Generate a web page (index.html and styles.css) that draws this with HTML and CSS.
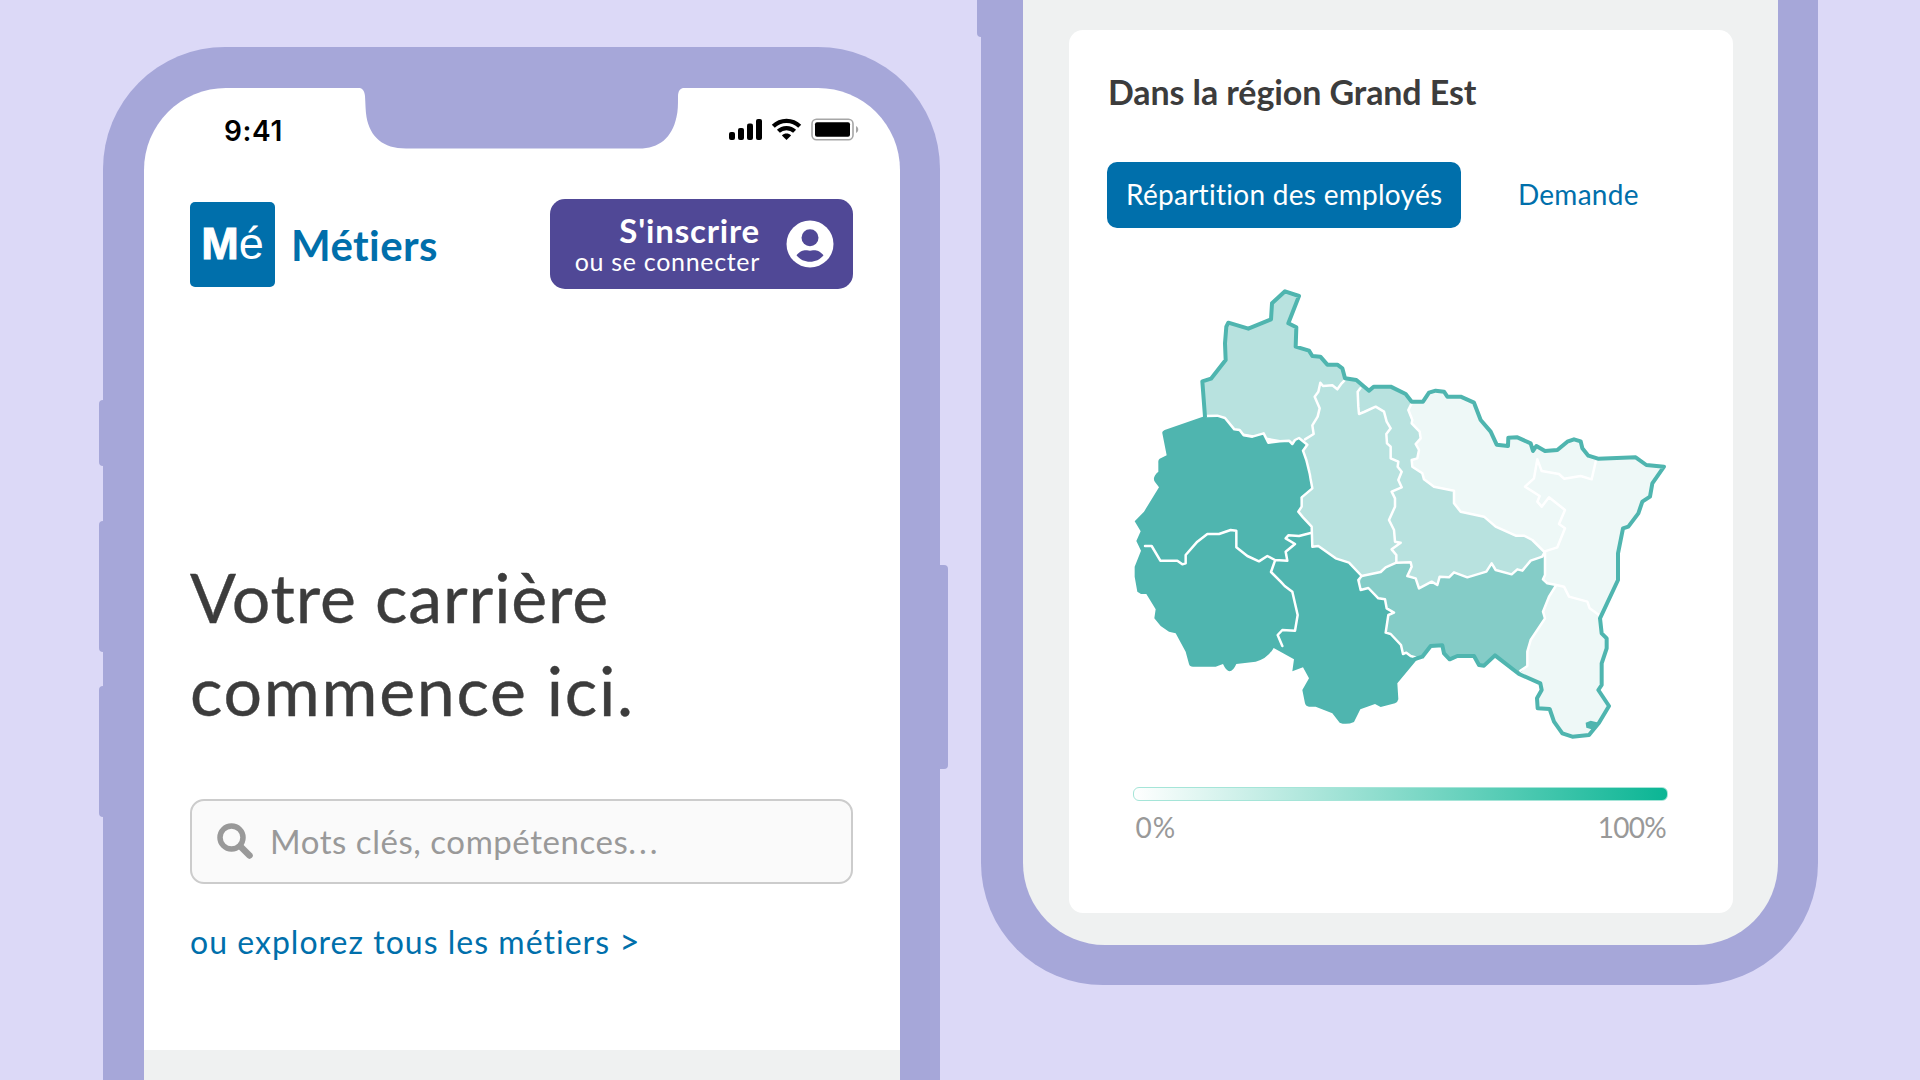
FILE: index.html
```html
<!DOCTYPE html>
<html lang="fr">
<head>
<meta charset="utf-8">
<title>Métiers</title>
<link rel="stylesheet" href="styles.css">
</head>
<body>
<main class="stage">
  <section class="phone phone-home">
    <span class="key key-mute"></span>
    <span class="key key-up"></span>
    <span class="key key-down"></span>
    <span class="key key-power"></span>
    <svg class="notch" viewBox="0 0 343 102" width="343" height="102"><path d="M0 0H343V40.5H336C330 40.5 328 44 328 50C328 58 328 64 326.500 70C322 91 309 101.500 289 101.500H56C33 101.500 20 90 16.500 70C15.500 64 15.500 57 15 49C14.500 43 12 40.500 6 40.500H0Z"/></svg>
    <div class="screen">
      <div class="status">
        <span class="clock">9:41</span>
        <svg class="signals" viewBox="0 0 130 23" width="130" height="23">
          <rect x="0" y="14" width="6" height="8" rx="2"/><rect x="9" y="10" width="6" height="12" rx="2"/><rect x="18" y="5.500" width="6" height="16.500" rx="2"/><rect x="27" y="1" width="6" height="21" rx="2"/>
          <g fill="none" stroke="#000" stroke-width="4.200"><path d="M44.300 8.300C51.500 1 63.500 1 70.700 8.300"/><path d="M49.400 13.300C53.700 9 61.300 9 65.600 13.300"/></g>
          <path d="M52.900 17.400C55.500 14.900 59.500 14.900 62.100 17.400L57.500 22Z"/>
          <rect x="83" y="1.200" width="41" height="20.600" rx="4.500" fill="#fff" stroke="#a6a6a6" stroke-width="1.600"/><rect x="86" y="4.200" width="35" height="14.600" rx="2"/>
          <path d="M127 8C130 9.500 130 13.500 127 15Z" fill="#a6a6a6"/>
        </svg>
      </div>
      <header class="topbar">
        <div class="logo"><b>M</b><span>é</span></div>
        <span class="brand">Métiers</span>
        <div class="signup">
          <div class="signup-text"><strong>S'inscrire</strong><span>ou se connecter</span></div>
          <svg viewBox="0 0 48 48" width="48" height="48"><circle cx="24" cy="24" r="23.500" fill="#fff"/><circle cx="24" cy="17.800" r="8.500" fill="#504896"/><path d="M10.500 35.300C14 30.500 19 29.700 21 30.300Q24 31 27 30.300C29 29.700 34 30.500 37.500 35.300C31 44 17 44 10.500 35.300Z" fill="#504896"/></svg>
        </div>
      </header>
      <h1 class="headline"><span class="line-one">Votre carrière</span><br><span class="line-two">commence ici.</span></h1>
      <div class="search">
        <svg viewBox="0 0 36 36" width="36" height="36"><circle cx="14.500" cy="14.500" r="11.500" fill="none" stroke="#999" stroke-width="5.500"/><path d="M23.500 23.500L32.500 32.500" stroke="#999" stroke-width="6.500" stroke-linecap="round"/></svg>
        <span>Mots clés, compétences<span class="dots">...</span></span>
      </div>
      <a class="explore">ou explorez tous les métiers <span class="arrow">&gt;</span></a>
      <div class="next"></div>
    </div>
  </section>

  <section class="phone phone-region">
    <span class="key key-side"></span>
    <div class="screen">
      <article class="card">
        <h2 class="card-title">Dans la région Grand Est</h2>
        <nav class="tabs"><span class="tab tab-on">Répartition des employés</span><span class="tab">Demande</span></nav>
        <svg class="map" viewBox="0 0 1680 1410" width="560" height="470">
          <path class="pale" d="M868 365H912L930 338L950 332L975 335L985 350H1025L1065 368L1085 420L1115 455L1133 494L1167 498L1168 473L1195 472L1235 490L1242 513L1252 498L1278 513L1315 510L1345 485L1365 478L1385 484L1390 505L1408 527L1437 536L1550 532L1582 555L1635 560L1600 610L1593 650L1570 665L1558 700L1528 740L1512 745L1497 820V900L1443 1015L1448 1060L1463 1075V1105L1448 1150V1215L1438 1230L1470 1278L1440 1328L1410 1365L1360 1370L1330 1360L1305 1325L1292 1287L1256 1285L1254 1255L1268 1230L1264 1210L1200 1182L1200 860L868 600Z"/>
          <path class="light" d="M258 410L250 304L276 296L320 240L318 190L322 140L328 128L388 146L456 118L459 70L498 34L540 48L508 130L532 142L530 200L570 212L580 228L604 230L625 254H655L670 265L678 295L712 300L750 332L764 320H815L860 342L878 367L868 390L880 420L878 430L902 455L905 475L890 492L900 510L895 535L878 540L880 560L910 580L915 598L945 620L1005 632V670L1025 695L1095 710L1130 740L1190 767H1215L1240 780L1275 815L1200 940H740L540 860V490L258 440Z"/>
          <path class="medium" d="M1278 815L1270 830L1235 842L1210 872L1195 868L1178 883L1130 870L1118 850L1102 875L1045 892L1005 877L990 892L962 890L955 915L938 905L900 925L890 895L865 888L878 860L875 847L832 848L800 862L785 876L728 888L700 1000L860 1140L885 1138L910 1130L935 1098L970 1096L975 1120L992 1138L1015 1128H1065L1080 1155L1095 1157L1128 1126L1200 1182L1225 1158V1115L1235 1080L1278 1015L1272 995L1290 950L1312 915L1285 910L1272 898L1278 885Z"/>
          <path class="dark" d="M258 408L137 450Q128 455 130 460L143 526L122 536Q117 540 118 548V575Q98 592 108 606L120 622L75 695L47 724L65 754L52 783L66 812L47 860V890L55 935L66 942H82L110 988L106 1015L125 1038L150 1055L170 1060L200 1115L210 1152Q212 1160 222 1160H290L312 1152Q332 1196 352 1152L410 1145Q445 1137 464 1104L525 1138L520 1174L552 1162L570 1195L550 1230L558 1270Q561 1280 570 1280H590L640 1300L662 1328Q682 1336 705 1326L724 1288L768 1272L785 1281L828 1270Q836 1267 838 1258L835 1210L888 1146L900 1130L875 1128L862 1118L852 1122L846 1095L815 1062L800 1058L808 1005L825 998L803 985L798 958L778 955L748 924L725 930L718 900L728 888L690 848L650 835L598 798L580 800L578 740L552 712L538 695L548 680L545 652L580 625L575 580L562 540L552 512L562 490L540 474L528 480L520 492L510 482L482 484L448 488L434 460L400 470L374 466L362 450L346 448L318 414L295 407Z"/>
          <g class="borders">
            <path d="M262 408L295 407L318 414L346 448L362 450L374 466L400 470L434 460L448 488L482 484L510 482L520 492L528 480L540 474L565 494L552 512L562 540L572 580L575 598L580 625L548 652V680L538 695L552 712L578 740L580 800L598 798L650 835L690 848L728 888"/>
            <path d="M558 478L584 462L580 436L596 410L602 385L587 350L598 335L604 308L612 318L640 316L655 328L668 310L676 302"/>
            <path d="M724 325L716 335L718 380L720 402L735 396L770 380L795 395L803 425L815 445L802 462L804 490L815 500V535L838 545L836 560L848 575L838 600L848 622L818 635L828 655V680L810 720L825 750L828 785L845 788L818 808L832 825V848"/>
            <path d="M878 370L868 390L880 420L878 430L902 455L905 475L890 492L900 510L895 535L878 540L880 560L910 580L915 598L945 620L1005 632V670L1025 695L1095 710L1130 740L1190 767H1215L1240 780L1275 815L1315 802L1338 745L1320 732L1338 690L1290 652L1268 680L1255 665L1262 648L1218 620L1245 595L1255 538L1268 573L1320 582L1335 596L1385 588L1418 598L1430 545"/>
            <path d="M1278 815L1270 830L1235 842L1210 872L1195 868L1178 883L1130 870L1118 850L1102 875L1045 892L1005 877L990 892L962 890L955 915L938 905L900 925L890 895L865 888L878 860L875 847L832 848L800 862L785 876L728 888L718 900L725 930L748 924L778 955L798 958L803 985L825 998L808 1005L800 1058L815 1062L846 1095L852 1122L862 1118L875 1128L890 1132"/>
            <path d="M1278 815V885L1272 898L1285 910L1312 915L1335 920L1350 950L1405 965L1412 985L1440 1005M1312 915L1290 950L1272 995L1278 1015L1235 1080L1225 1115V1158L1204 1172"/>
            <path d="M78 798H98L124 842H175L190 853L200 850V825L235 785L265 762H300L335 750L352 752V802L385 828L420 844L445 828L468 840L505 842L500 815L528 792L500 775L508 766L540 768L578 758M468 842L456 876L485 905L497 918L520 935L536 1005L528 1052L490 1050L476 1065L490 1098"/>
          </g>
          <path class="outline" d="M258 410L250 304L276 296L320 240L318 190L322 140L328 128L388 146L456 118L459 70L498 34L540 48L508 130L532 142L530 200L570 212L580 228L604 230L625 254H655L670 265L678 295L712 300L750 332L764 320H815L860 342L878 365H912L930 338L950 332L975 335L985 350H1025L1065 368L1085 420L1115 455L1133 494L1167 498L1168 473L1195 472L1235 490L1242 513L1252 498L1278 513L1315 510L1345 485L1365 478L1385 484L1390 505L1408 527L1437 536L1550 532L1582 555L1635 560L1600 610L1593 650L1570 665L1558 700L1528 740L1512 745L1497 820V900L1443 1015L1448 1060L1463 1075V1105L1448 1150V1215L1438 1230L1470 1278L1440 1328L1410 1365L1360 1370L1330 1360L1305 1325L1292 1287L1256 1285L1254 1255L1268 1230L1264 1210L1200 1182L1128 1126L1095 1157L1080 1155L1065 1128H1015L992 1138L975 1120L970 1096L935 1098L910 1130L885 1138"/>
          <path class="dark" d="M1400 1328L1415 1322L1440 1328L1425 1350L1402 1343Z"/>
        </svg>
        <div class="scale"></div>
        <div class="scale-labels"><span class="min">0%</span><span class="max">100%</span></div>
      </article>
    </div>
  </section>
</main>
</body>
</html>
```
FILE: styles.css
```css
* { box-sizing: border-box; }
body { margin: 0; background: #dcd9f7; font-family: Lato, "Liberation Sans", sans-serif; font-variant-ligatures: none; color: #3c3c3c; }
.stage { display: flex; gap: 41px; width: 1920px; height: 1080px; padding-left: 103px; overflow: hidden; }
.phone { position: relative; flex: none; width: 837px; background: #a6a7d9; }
.phone-home { height: 1100px; margin-top: 47px; padding: 40.5px 40.5px 0; border-radius: 122px 122px 0 0; }
.phone-region { height: 985px; padding: 0 40.5px 40.5px 41.5px; border-radius: 0 0 122px 122px; }
.screen { display: flex; flex-direction: column; height: 100%; background: #fff; }
.phone-home .screen { border-radius: 82px 82px 0 0; }
.phone-region .screen { padding: 30px 45px 31.500px 46px; border-radius: 0 0 82px 82px; background: #eff1f1; }

.key { position: absolute; left: -4px; width: 8px; border-radius: 4px 0 0 4px; background: #a6a7d9; }
.key-mute { top: 353px; height: 66px; }
.key-up { top: 474px; height: 131px; }
.key-down { top: 639px; height: 131px; }
.key-power { top: 518px; left: auto; right: -8px; width: 12px; height: 204px; border-radius: 0 4px 4px 0; }
.key-side { top: -20px; height: 57px; }
.notch { position: absolute; left: 247px; top: 0; fill: #a6a7d9; }

.status { display: flex; justify-content: space-between; align-items: center; height: 111.500px; padding: 0 41px 28px 80.500px; }
.clock { padding-top: 4px; font: 600 28px/34px Inter, sans-serif; letter-spacing: .6px; color: #000; }
.topbar { display: flex; align-items: center; height: 90px; padding: 0 46.500px; }
.logo { display: flex; justify-content: center; align-items: center; width: 85px; height: 85px; border-radius: 5px; background: #006fab; color: #fff; font: 45px/84px "Liberation Sans", sans-serif; }
.logo b { -webkit-text-stroke: 1px #fff; }
.brand { margin-left: 16px; padding-top: 1px; font-size: 42px; font-weight: 700; letter-spacing: .4px; color: #006fab; }
.signup { display: flex; align-items: center; justify-content: flex-end; gap: 26px; width: 303px; height: 90px; margin-left: auto; padding-right: 19px; border-radius: 15px; background: #504896; color: #fff; }
.signup-text { display: flex; flex-direction: column; align-items: flex-end; }
.signup strong { font-size: 33px; line-height: 34px; letter-spacing: .8px; }
.signup-text span { font-size: 25px; line-height: 28px; letter-spacing: .68px; }
.headline { margin: 261px 46.500px 62.500px; font-size: 68px; line-height: 93px; font-weight: 400; -webkit-text-stroke: .4px #3c3c3c; }
.line-one { letter-spacing: .85px; }
.line-two { letter-spacing: 1.72px; }
.search { display: flex; align-items: center; gap: 17px; height: 85px; margin: 0 46.500px; padding-left: 25px; border: 2px solid #ccc; border-radius: 14px; background: #fafafa; color: #999; font-size: 33px; letter-spacing: .55px; flex: none; }
.dots { letter-spacing: 3px; }
.explore { margin: 38px 46.500px 0; font-size: 32px; line-height: 40px; letter-spacing: 1.02px; color: #006fab; }
.arrow { font-size: 35px; line-height: 1; }
.next { flex: 1; margin-top: 88.500px; background: #eff1f1; }

.card { display: flex; flex-direction: column; height: 883px; padding: 42px 38.500px 0; border-radius: 14px; background: #fff; }
.card-title { margin: 0; font-size: 34px; line-height: 40px; padding-left: 1px; letter-spacing: -.1px; }
.tabs { display: flex; gap: 38px; margin-top: 50px; }
.tab { padding: 0 18.500px 0 19px; height: 66px; line-height: 65px; font-size: 28px; letter-spacing: .28px; border-radius: 10px; color: #006fab; }
.tab-on { background: #006fab; color: #fff; }
.map { margin: 52px 0 0 12px; flex: none; }
.map path { stroke-linejoin: round; }
.map .pale { fill: #eef8f7; }
.map .light { fill: #b8e2df; }
.map .medium { fill: #84ccc7; }
.map .dark { fill: #4fb5af; }
.borders { fill: none; stroke: #fff; stroke-width: 7.500; stroke-linecap: round; }
.map .outline { fill: none; stroke: #4fb5af; stroke-width: 12; stroke-linecap: round; }
.scale { height: 14px; margin: 37px 26px 0 26px; border: 1.500px solid #a5e5d8; border-radius: 6px; background: linear-gradient(90deg, #fff, #0ab594) border-box; }
.scale-labels { display: flex; justify-content: space-between; margin: 9px 28px 0 28.500px; font-size: 28px; line-height: 34px; color: #999; }
.min { letter-spacing: 1.1px; }
.max { letter-spacing: -.7px; }
```
